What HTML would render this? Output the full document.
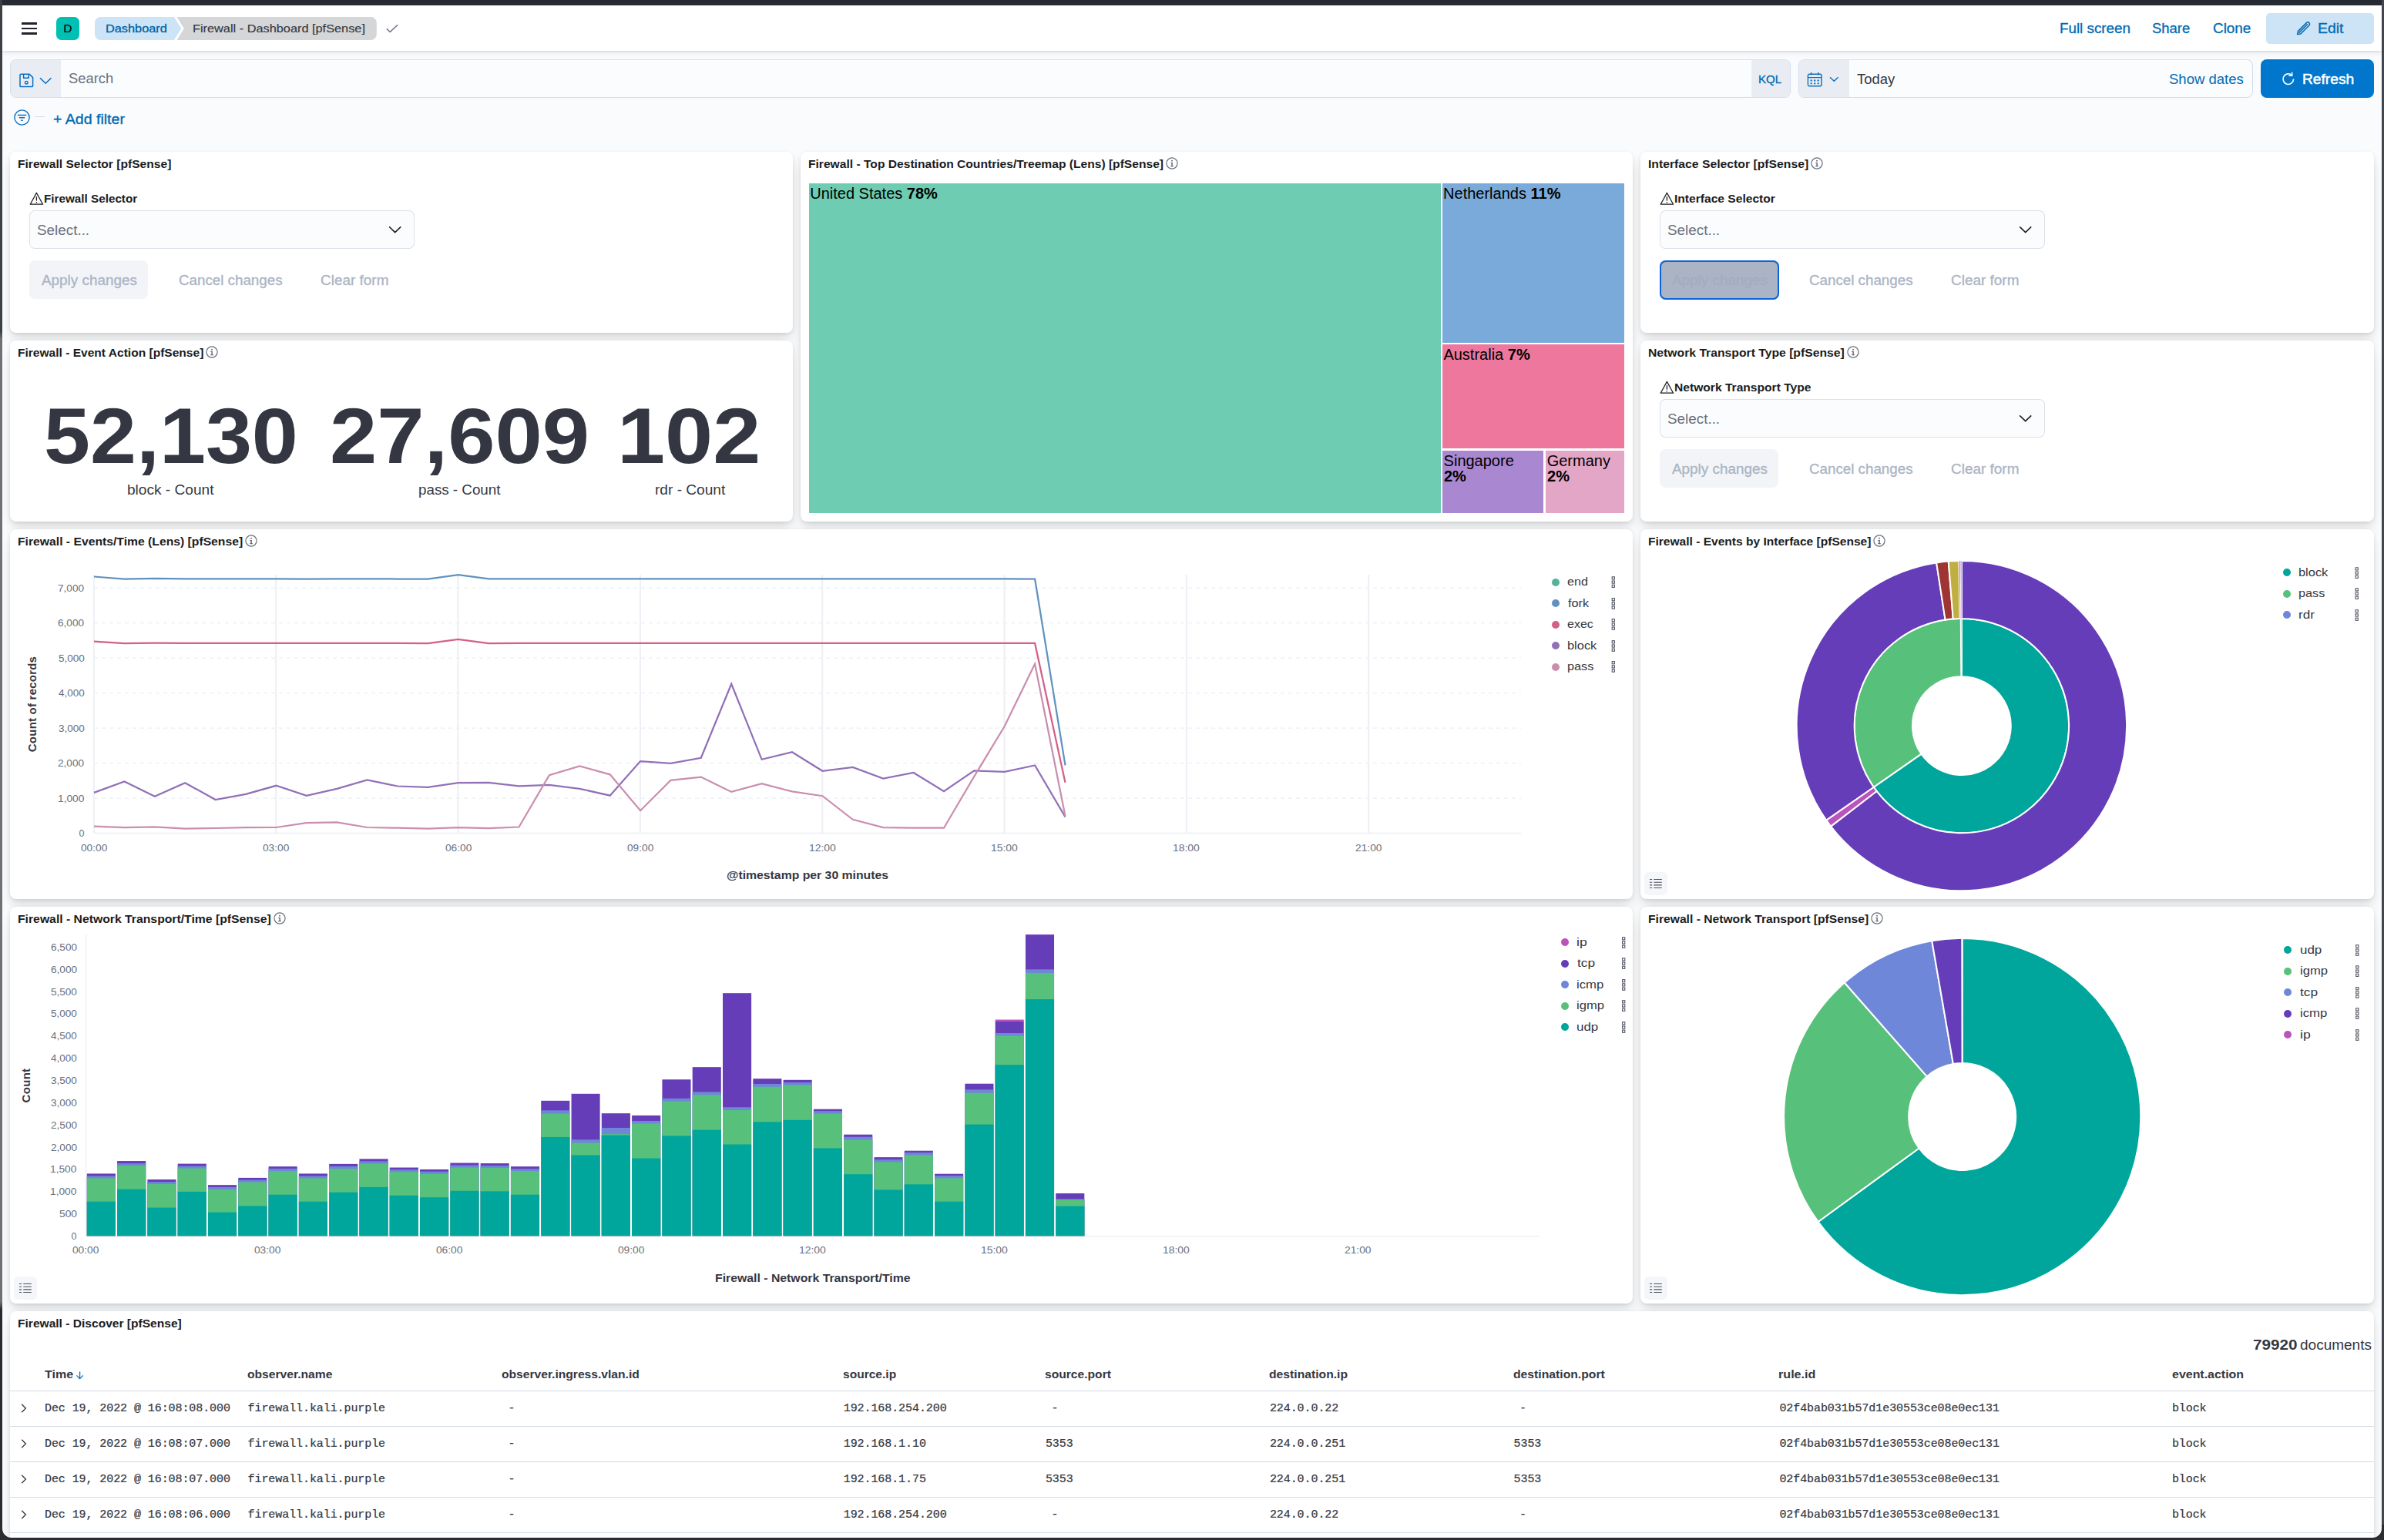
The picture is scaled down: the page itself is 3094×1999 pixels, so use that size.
<!DOCTYPE html>
<html><head><meta charset="utf-8"><title>Firewall - Dashboard [pfSense]</title>
<style>
html,body{margin:0;padding:0;}
html{width:3094px;height:1999px;overflow:hidden;}
body{width:3094px;height:1999px;overflow:hidden;position:relative;background:#fafbfd;font-family:"Liberation Sans",sans-serif;}
.t{position:absolute;white-space:pre;}
.p{position:absolute;background:#fff;border-radius:8px;box-shadow:0 1.1px 5px -1.25px rgba(0,0,0,.09),0 3.2px 10px -1.25px rgba(0,0,0,.07),0 7px 15px -1.25px rgba(0,0,0,.055),0 18px 18px -1.25px rgba(0,0,0,.045);}
svg{overflow:visible}
</style></head><body>
<div style="position:absolute;left:3.00px;top:0.00px;width:3088.00px;height:66.00px;background:#fff;box-shadow:0 1px 3px rgba(30,50,90,.14),0 3px 7px rgba(30,50,90,.08);"></div>
<div style="position:absolute;left:28.00px;top:29.20px;width:20.00px;height:2.60px;background:#22242e;"></div>
<div style="position:absolute;left:28.00px;top:35.70px;width:20.00px;height:2.60px;background:#22242e;"></div>
<div style="position:absolute;left:28.00px;top:42.10px;width:20.00px;height:2.60px;background:#22242e;"></div>
<div style="position:absolute;left:73.00px;top:22.00px;width:30.00px;height:30.00px;background:#00bfb3;border-radius:6.5px;"></div>
<div class="t" style="left:82.15px;top:29.00px;font:normal 15.50px/1 'Liberation Sans',sans-serif;color:#000;-webkit-text-stroke:0.10px #000;">D</div>
<svg style="position:absolute;left:123.00px;top:22.00px;" width="370.00" height="30.00" viewBox="0 0 370 30"><path d="M7.5 0H103L112.3 15L103 30H7.5A7.5 7.5 0 0 1 0 22.5V7.5A7.5 7.5 0 0 1 7.5 0Z" fill="#cce4f5"/><path d="M106.5 0H358.3A7.5 7.5 0 0 1 365.8 7.5V22.5A7.5 7.5 0 0 1 358.3 30H106.5L115.8 15Z" fill="#d5d6d8"/></svg>
<div class="t" style="left:136.89px;top:29.00px;font:normal 15.00px/1 'Liberation Sans',sans-serif;color:#0061a6;transform:scaleX(1.0877);transform-origin:0 0;-webkit-text-stroke:0.30px #0061a6;">Dashboard</div>
<div class="t" style="left:250.40px;top:29.00px;font:normal 15.00px/1 'Liberation Sans',sans-serif;color:#343741;transform:scaleX(1.0874);transform-origin:0 0;-webkit-text-stroke:0.15px #343741;">Firewall - Dashboard [pfSense]</div>
<svg style="position:absolute;left:500.00px;top:30.00px;" width="18.00" height="14.00" viewBox="0 0 18 14"><path d="M1.8 7.2L6.2 11.5L16.2 2.2" fill="none" stroke="#69707d" stroke-width="1.5"/></svg>
<div class="t" style="left:2672.80px;top:29.00px;font:normal 17.50px/1 'Liberation Sans',sans-serif;color:#006bb4;transform:scaleX(1.0743);transform-origin:0 0;-webkit-text-stroke:0.30px #006bb4;">Full screen</div>
<div class="t" style="left:2793.47px;top:29.00px;font:normal 17.50px/1 'Liberation Sans',sans-serif;color:#006bb4;transform:scaleX(1.0543);transform-origin:0 0;-webkit-text-stroke:0.30px #006bb4;">Share</div>
<div class="t" style="left:2871.76px;top:29.00px;font:normal 17.50px/1 'Liberation Sans',sans-serif;color:#006bb4;transform:scaleX(1.0794);transform-origin:0 0;-webkit-text-stroke:0.30px #006bb4;">Clone</div>
<div style="position:absolute;left:2941.00px;top:17.00px;width:140.00px;height:40.00px;background:#cce4f5;border-radius:5px;"></div>
<svg style="position:absolute;left:2980.00px;top:27.00px;" width="20.00" height="20.00" viewBox="0 0 20 20"><path d="M1.6 17.6L2.4 13.6L13.4 2.6a2.4 2.4 0 0 1 3.4 3.4L5.8 17Z M3.6 15.6L14.9 4.3" fill="none" stroke="#006bb4" stroke-width="1.5" stroke-linejoin="round"/></svg>
<div class="t" style="left:3008.34px;top:29.00px;font:normal 17.50px/1 'Liberation Sans',sans-serif;color:#006bb4;transform:scaleX(1.1115);transform-origin:0 0;-webkit-text-stroke:0.30px #006bb4;">Edit</div>
<div style="position:absolute;left:13.00px;top:77.00px;width:2311.00px;height:50.00px;background:#fbfcfd;border-radius:8px;box-shadow:inset 0 0 0 1px rgba(17,63,150,.16);"></div>
<div style="position:absolute;left:14px;top:78px;width:65px;height:48px;background:#e9edf3;border-radius:7px 0 0 7px;"></div>
<svg style="position:absolute;left:24.50px;top:94.50px;" width="19.00" height="19.00" viewBox="0 0 19 19"><path d="M2.2 1.2H13.2L17.6 5.6V16.4a1.2 1.2 0 0 1-1.2 1.2H2.2A1.2 1.2 0 0 1 1 16.4V2.4A1.2 1.2 0 0 1 2.2 1.2Z M5.6 1.5V6.2H12.2V1.5" fill="none" stroke="#0a6fc2" stroke-width="1.5" stroke-linejoin="round"/><circle cx="9.3" cy="12.2" r="1.8" fill="none" stroke="#0a6fc2" stroke-width="1.4"/></svg>
<svg style="position:absolute;left:51.00px;top:99.50px;" width="17.00" height="10.00" viewBox="0 0 17 10"><path d="M1 1.2L8.2 8.2L15.4 1.2" fill="none" stroke="#0a6fc2" stroke-width="1.6"/></svg>
<div class="t" style="left:89.27px;top:94.00px;font:normal 17.50px/1 'Liberation Sans',sans-serif;color:#69707d;transform:scaleX(1.0495);transform-origin:0 0;">Search</div>
<div style="position:absolute;left:2273px;top:78px;width:50px;height:48px;background:#e9edf3;border-radius:0 7px 7px 0;"></div>
<div class="t" style="left:2281.99px;top:95.00px;font:normal 15.00px/1 'Liberation Sans',sans-serif;color:#006bb4;transform:scaleX(1.0053);transform-origin:0 0;-webkit-text-stroke:0.35px #006bb4;">KQL</div>
<div style="position:absolute;left:2334.00px;top:77.00px;width:589.50px;height:50.00px;background:#fbfcfd;border-radius:8px;box-shadow:inset 0 0 0 1px rgba(17,63,150,.16);"></div>
<div style="position:absolute;left:2335px;top:78px;width:65px;height:48px;background:#e9edf3;border-radius:7px 0 0 7px;"></div>
<svg style="position:absolute;left:2344.50px;top:92.50px;" width="21.00" height="21.00" viewBox="0 0 21 21"><rect x="1.4" y="3.2" width="17.6" height="15.6" rx="2" fill="none" stroke="#0a6fc2" stroke-width="1.4"/><path d="M1.4 7.6H19 M5.6 1V4.6 M14.8 1V4.6" stroke="#0a6fc2" stroke-width="1.4" fill="none"/><path d="M4.6 10.6h2.2v1.8H4.6z M9.1 10.6h2.2v1.8H9.1z M13.6 10.6h2.2v1.8h-2.2z M4.6 14.4h2.2v1.8H4.6z M9.1 14.4h2.2v1.8H9.1z M13.6 14.4h2.2v1.8h-2.2z" fill="#0a6fc2"/></svg>
<svg style="position:absolute;left:2374.00px;top:98.50px;" width="13.00" height="8.00" viewBox="0 0 13 8"><path d="M1 1.2L6.3 6.3L11.6 1.2" fill="none" stroke="#0a6fc2" stroke-width="1.4"/></svg>
<div class="t" style="left:2410.33px;top:95.00px;font:normal 17.50px/1 'Liberation Sans',sans-serif;color:#343741;transform:scaleX(1.0523);transform-origin:0 0;">Today</div>
<div class="t" style="left:2815.17px;top:95.00px;font:normal 17.50px/1 'Liberation Sans',sans-serif;color:#006bb4;transform:scaleX(1.0584);transform-origin:0 0;">Show dates</div>
<div style="position:absolute;left:2934.00px;top:77.00px;width:147.00px;height:50.00px;background:#0077cc;border-radius:8px;"></div>
<svg style="position:absolute;left:2961.00px;top:92.50px;" width="19.00" height="19.00" viewBox="0 0 19 19"><path d="M15.6 9.6a6.8 6.8 0 1 1-2.2-5" fill="none" stroke="#fff" stroke-width="1.6"/><path d="M13.6 0.8V5.2H9.2" fill="none" stroke="#fff" stroke-width="1.6"/></svg>
<div class="t" style="left:2988.46px;top:95.00px;font:normal 17.50px/1 'Liberation Sans',sans-serif;color:#fff;transform:scaleX(1.0969);transform-origin:0 0;-webkit-text-stroke:0.50px #fff;">Refresh</div>
<svg style="position:absolute;left:17.50px;top:141.50px;" width="21.00" height="21.00" viewBox="0 0 21 21"><circle cx="10.5" cy="10.5" r="9.6" fill="none" stroke="#0a6fc2" stroke-width="1.4"/><path d="M4.8 7.4H16.2 M6.8 10.8H14.2 M9.2 14.2H11.8" stroke="#0a6fc2" stroke-width="1.5"/></svg>
<div style="position:absolute;left:45.30px;top:150.80px;width:12.60px;height:1.30px;background:#d3dae6;"></div>
<div class="t" style="left:68.72px;top:147.00px;font:normal 17.50px/1 'Liberation Sans',sans-serif;color:#006bb4;transform:scaleX(1.1173);transform-origin:0 0;-webkit-text-stroke:0.33px #006bb4;">+ Add filter</div>
<div class="p" style="left:13px;top:197px;width:1016px;height:235px;"></div>
<div class="p" style="left:1039px;top:197px;width:1080px;height:480px;"></div>
<div class="p" style="left:2129px;top:197px;width:952px;height:235px;"></div>
<div class="p" style="left:13px;top:442px;width:1016px;height:235px;"></div>
<div class="p" style="left:2129px;top:442px;width:952px;height:235px;"></div>
<div class="p" style="left:13px;top:687px;width:2106px;height:480px;"></div>
<div class="p" style="left:2129px;top:687px;width:952px;height:480px;"></div>
<div class="p" style="left:13px;top:1177px;width:2106px;height:515px;"></div>
<div class="p" style="left:2129px;top:1177px;width:952px;height:515px;"></div>
<div class="p" style="left:13px;top:1702px;width:3068px;height:297px;border-radius:8px 8px 0 0;"></div>
<div class="t" style="left:22.59px;top:205.00px;font:bold 15.00px/1 'Liberation Sans',sans-serif;color:#1a1c21;transform:scaleX(1.0396);transform-origin:0 0;">Firewall Selector [pfSense]</div>
<div class="t" style="left:1048.59px;top:205.00px;font:bold 15.00px/1 'Liberation Sans',sans-serif;color:#1a1c21;transform:scaleX(1.0404);transform-origin:0 0;">Firewall - Top Destination Countries/Treemap (Lens) [pfSense]</div>
<svg style="position:absolute;left:1512.90px;top:203.90px;" width="16.00" height="16.00" viewBox="0 0 16 16"><circle cx="8" cy="8" r="7.1" fill="none" stroke="#69707d" stroke-width="1.2"/><rect x="7.2" y="3.9" width="1.6" height="1.7" fill="#5a606c"/><path d="M6.3 6.9H8.8V11.3H9.9V12.3H6.1V11.3H7.4V7.9H6.3Z" fill="#5a606c"/></svg>
<div class="t" style="left:2138.58px;top:205.00px;font:bold 15.00px/1 'Liberation Sans',sans-serif;color:#1a1c21;transform:scaleX(1.0491);transform-origin:0 0;">Interface Selector [pfSense]</div>
<svg style="position:absolute;left:2350.00px;top:203.90px;" width="16.00" height="16.00" viewBox="0 0 16 16"><circle cx="8" cy="8" r="7.1" fill="none" stroke="#69707d" stroke-width="1.2"/><rect x="7.2" y="3.9" width="1.6" height="1.7" fill="#5a606c"/><path d="M6.3 6.9H8.8V11.3H9.9V12.3H6.1V11.3H7.4V7.9H6.3Z" fill="#5a606c"/></svg>
<div class="t" style="left:22.59px;top:450.00px;font:bold 15.00px/1 'Liberation Sans',sans-serif;color:#1a1c21;transform:scaleX(1.0365);transform-origin:0 0;">Firewall - Event Action [pfSense]</div>
<svg style="position:absolute;left:267.20px;top:448.90px;" width="16.00" height="16.00" viewBox="0 0 16 16"><circle cx="8" cy="8" r="7.1" fill="none" stroke="#69707d" stroke-width="1.2"/><rect x="7.2" y="3.9" width="1.6" height="1.7" fill="#5a606c"/><path d="M6.3 6.9H8.8V11.3H9.9V12.3H6.1V11.3H7.4V7.9H6.3Z" fill="#5a606c"/></svg>
<div class="t" style="left:2138.58px;top:450.00px;font:bold 15.00px/1 'Liberation Sans',sans-serif;color:#1a1c21;transform:scaleX(1.0479);transform-origin:0 0;">Network Transport Type [pfSense]</div>
<svg style="position:absolute;left:2396.60px;top:448.90px;" width="16.00" height="16.00" viewBox="0 0 16 16"><circle cx="8" cy="8" r="7.1" fill="none" stroke="#69707d" stroke-width="1.2"/><rect x="7.2" y="3.9" width="1.6" height="1.7" fill="#5a606c"/><path d="M6.3 6.9H8.8V11.3H9.9V12.3H6.1V11.3H7.4V7.9H6.3Z" fill="#5a606c"/></svg>
<div class="t" style="left:22.58px;top:695.00px;font:bold 15.00px/1 'Liberation Sans',sans-serif;color:#1a1c21;transform:scaleX(1.0473);transform-origin:0 0;">Firewall - Events/Time (Lens) [pfSense]</div>
<svg style="position:absolute;left:318.00px;top:693.90px;" width="16.00" height="16.00" viewBox="0 0 16 16"><circle cx="8" cy="8" r="7.1" fill="none" stroke="#69707d" stroke-width="1.2"/><rect x="7.2" y="3.9" width="1.6" height="1.7" fill="#5a606c"/><path d="M6.3 6.9H8.8V11.3H9.9V12.3H6.1V11.3H7.4V7.9H6.3Z" fill="#5a606c"/></svg>
<div class="t" style="left:2138.59px;top:695.00px;font:bold 15.00px/1 'Liberation Sans',sans-serif;color:#1a1c21;transform:scaleX(1.0364);transform-origin:0 0;">Firewall - Events by Interface [pfSense]</div>
<svg style="position:absolute;left:2431.30px;top:693.90px;" width="16.00" height="16.00" viewBox="0 0 16 16"><circle cx="8" cy="8" r="7.1" fill="none" stroke="#69707d" stroke-width="1.2"/><rect x="7.2" y="3.9" width="1.6" height="1.7" fill="#5a606c"/><path d="M6.3 6.9H8.8V11.3H9.9V12.3H6.1V11.3H7.4V7.9H6.3Z" fill="#5a606c"/></svg>
<div class="t" style="left:22.58px;top:1185.00px;font:bold 15.00px/1 'Liberation Sans',sans-serif;color:#1a1c21;transform:scaleX(1.0497);transform-origin:0 0;">Firewall - Network Transport/Time [pfSense]</div>
<svg style="position:absolute;left:354.50px;top:1183.90px;" width="16.00" height="16.00" viewBox="0 0 16 16"><circle cx="8" cy="8" r="7.1" fill="none" stroke="#69707d" stroke-width="1.2"/><rect x="7.2" y="3.9" width="1.6" height="1.7" fill="#5a606c"/><path d="M6.3 6.9H8.8V11.3H9.9V12.3H6.1V11.3H7.4V7.9H6.3Z" fill="#5a606c"/></svg>
<div class="t" style="left:2138.58px;top:1185.00px;font:bold 15.00px/1 'Liberation Sans',sans-serif;color:#1a1c21;transform:scaleX(1.0434);transform-origin:0 0;">Firewall - Network Transport [pfSense]</div>
<svg style="position:absolute;left:2428.00px;top:1183.90px;" width="16.00" height="16.00" viewBox="0 0 16 16"><circle cx="8" cy="8" r="7.1" fill="none" stroke="#69707d" stroke-width="1.2"/><rect x="7.2" y="3.9" width="1.6" height="1.7" fill="#5a606c"/><path d="M6.3 6.9H8.8V11.3H9.9V12.3H6.1V11.3H7.4V7.9H6.3Z" fill="#5a606c"/></svg>
<div class="t" style="left:22.59px;top:1710.00px;font:bold 15.00px/1 'Liberation Sans',sans-serif;color:#1a1c21;transform:scaleX(1.0373);transform-origin:0 0;">Firewall - Discover [pfSense]</div>
<svg style="position:absolute;left:38.30px;top:249.20px;" width="19.00" height="18.00" viewBox="0 0 19 18"><path d="M9.4 1.4L17.6 16.2H1.2Z" fill="none" stroke="#1a1c21" stroke-width="1.25" stroke-linejoin="round"/><path d="M9.4 6.2V11.6" stroke="#1a1c21" stroke-width="1.3"/><rect x="8.75" y="13" width="1.3" height="1.4" fill="#1a1c21"/></svg>
<div class="t" style="left:57.31px;top:250.00px;font:bold 15.00px/1 'Liberation Sans',sans-serif;color:#1a1c21;transform:scaleX(1.0165);transform-origin:0 0;">Firewall Selector</div>
<div style="position:absolute;left:38.30px;top:273.00px;width:499.50px;height:50.00px;background:#fbfcfd;border-radius:7.5px;box-shadow:inset 0 0 0 1px rgba(17,43,100,.13);"></div>
<div class="t" style="left:47.95px;top:291.00px;font:normal 17.50px/1 'Liberation Sans',sans-serif;color:#69707d;transform:scaleX(1.0772);transform-origin:0 0;">Select...</div>
<svg style="position:absolute;left:503.80px;top:293.40px;" width="18.00" height="11.00" viewBox="0 0 18 11"><path d="M1.2 1.4L8.7 8.6L16.2 1.4" fill="none" stroke="#1a1c21" stroke-width="1.5"/></svg>
<div style="position:absolute;left:38.30px;top:338.20px;width:153.60px;height:49.60px;background:#f2f4f8;border-radius:7.5px;"></div>
<div class="t" style="left:53.50px;top:356.00px;font:normal 17.50px/1 'Liberation Sans',sans-serif;color:#abb4c4;transform:scaleX(1.0789);transform-origin:0 0;-webkit-text-stroke:0.30px #abb4c4;">Apply changes</div>
<div class="t" style="left:231.66px;top:356.00px;font:normal 17.50px/1 'Liberation Sans',sans-serif;color:#abb4c4;transform:scaleX(1.0719);transform-origin:0 0;-webkit-text-stroke:0.30px #abb4c4;">Cancel changes</div>
<div class="t" style="left:415.75px;top:356.00px;font:normal 17.50px/1 'Liberation Sans',sans-serif;color:#abb4c4;transform:scaleX(1.0826);transform-origin:0 0;-webkit-text-stroke:0.30px #abb4c4;">Clear form</div>
<svg style="position:absolute;left:2154.30px;top:249.20px;" width="19.00" height="18.00" viewBox="0 0 19 18"><path d="M9.4 1.4L17.6 16.2H1.2Z" fill="none" stroke="#1a1c21" stroke-width="1.25" stroke-linejoin="round"/><path d="M9.4 6.2V11.6" stroke="#1a1c21" stroke-width="1.3"/><rect x="8.75" y="13" width="1.3" height="1.4" fill="#1a1c21"/></svg>
<div class="t" style="left:2173.29px;top:250.00px;font:bold 15.00px/1 'Liberation Sans',sans-serif;color:#1a1c21;transform:scaleX(1.0399);transform-origin:0 0;">Interface Selector</div>
<div style="position:absolute;left:2154.30px;top:273.00px;width:499.50px;height:50.00px;background:#fbfcfd;border-radius:7.5px;box-shadow:inset 0 0 0 1px rgba(17,43,100,.13);"></div>
<div class="t" style="left:2163.95px;top:291.00px;font:normal 17.50px/1 'Liberation Sans',sans-serif;color:#69707d;transform:scaleX(1.0772);transform-origin:0 0;">Select...</div>
<svg style="position:absolute;left:2619.80px;top:293.40px;" width="18.00" height="11.00" viewBox="0 0 18 11"><path d="M1.2 1.4L8.7 8.6L16.2 1.4" fill="none" stroke="#1a1c21" stroke-width="1.5"/></svg>
<div style="position:absolute;left:2154.10px;top:338.00px;width:154.60px;height:50.80px;background:#abb4c4;border-radius:8px;box-shadow:inset 0 0 0 2px #0b64dd;"></div>
<div class="t" style="left:2169.50px;top:356.00px;font:normal 17.50px/1 'Liberation Sans',sans-serif;color:#a3adbf;transform:scaleX(1.0789);transform-origin:0 0;-webkit-text-stroke:0.30px #a3adbf;">Apply changes</div>
<div class="t" style="left:2347.66px;top:356.00px;font:normal 17.50px/1 'Liberation Sans',sans-serif;color:#abb4c4;transform:scaleX(1.0719);transform-origin:0 0;-webkit-text-stroke:0.30px #abb4c4;">Cancel changes</div>
<div class="t" style="left:2531.75px;top:356.00px;font:normal 17.50px/1 'Liberation Sans',sans-serif;color:#abb4c4;transform:scaleX(1.0826);transform-origin:0 0;-webkit-text-stroke:0.30px #abb4c4;">Clear form</div>
<svg style="position:absolute;left:2154.30px;top:494.20px;" width="19.00" height="18.00" viewBox="0 0 19 18"><path d="M9.4 1.4L17.6 16.2H1.2Z" fill="none" stroke="#1a1c21" stroke-width="1.25" stroke-linejoin="round"/><path d="M9.4 6.2V11.6" stroke="#1a1c21" stroke-width="1.3"/><rect x="8.75" y="13" width="1.3" height="1.4" fill="#1a1c21"/></svg>
<div class="t" style="left:2173.29px;top:495.00px;font:bold 15.00px/1 'Liberation Sans',sans-serif;color:#1a1c21;transform:scaleX(1.0401);transform-origin:0 0;">Network Transport Type</div>
<div style="position:absolute;left:2154.30px;top:518.00px;width:499.50px;height:50.00px;background:#fbfcfd;border-radius:7.5px;box-shadow:inset 0 0 0 1px rgba(17,43,100,.13);"></div>
<div class="t" style="left:2163.95px;top:536.00px;font:normal 17.50px/1 'Liberation Sans',sans-serif;color:#69707d;transform:scaleX(1.0772);transform-origin:0 0;">Select...</div>
<svg style="position:absolute;left:2619.80px;top:538.40px;" width="18.00" height="11.00" viewBox="0 0 18 11"><path d="M1.2 1.4L8.7 8.6L16.2 1.4" fill="none" stroke="#1a1c21" stroke-width="1.5"/></svg>
<div style="position:absolute;left:2154.30px;top:583.20px;width:153.60px;height:49.60px;background:#f2f4f8;border-radius:7.5px;"></div>
<div class="t" style="left:2169.50px;top:601.00px;font:normal 17.50px/1 'Liberation Sans',sans-serif;color:#abb4c4;transform:scaleX(1.0789);transform-origin:0 0;-webkit-text-stroke:0.30px #abb4c4;">Apply changes</div>
<div class="t" style="left:2347.66px;top:601.00px;font:normal 17.50px/1 'Liberation Sans',sans-serif;color:#abb4c4;transform:scaleX(1.0719);transform-origin:0 0;-webkit-text-stroke:0.30px #abb4c4;">Cancel changes</div>
<div class="t" style="left:2531.75px;top:601.00px;font:normal 17.50px/1 'Liberation Sans',sans-serif;color:#abb4c4;transform:scaleX(1.0826);transform-origin:0 0;-webkit-text-stroke:0.30px #abb4c4;">Clear form</div>
<div class="t" style="left:56.76px;top:515.00px;font:bold 102.00px/1 'Liberation Sans',sans-serif;color:#343741;transform:scaleX(1.0573);transform-origin:0 0;">52,130</div>
<div class="t" style="left:428.09px;top:515.00px;font:bold 102.00px/1 'Liberation Sans',sans-serif;color:#343741;transform:scaleX(1.0802);transform-origin:0 0;">27,609</div>
<div class="t" style="left:800.85px;top:515.00px;font:bold 102.00px/1 'Liberation Sans',sans-serif;color:#343741;transform:scaleX(1.0947);transform-origin:0 0;">102</div>
<div class="t" style="left:165.00px;top:628.00px;font:normal 17.50px/1 'Liberation Sans',sans-serif;color:#343741;transform:scaleX(1.0909);transform-origin:0 0;">block - Count</div>
<div class="t" style="left:543.37px;top:628.00px;font:normal 17.50px/1 'Liberation Sans',sans-serif;color:#343741;transform:scaleX(1.0725);transform-origin:0 0;">pass - Count</div>
<div class="t" style="left:850.11px;top:628.00px;font:normal 17.50px/1 'Liberation Sans',sans-serif;color:#343741;transform:scaleX(1.0907);transform-origin:0 0;">rdr - Count</div>
<div style="position:absolute;left:1049.90px;top:237.90px;width:820.00px;height:428.00px;background:#6dccb1;"></div>
<div style="position:absolute;left:1871.70px;top:237.90px;width:236.20px;height:207.00px;background:#79aad9;"></div>
<div style="position:absolute;left:1871.70px;top:447.30px;width:236.20px;height:134.90px;background:#ee789d;"></div>
<div style="position:absolute;left:1871.70px;top:584.60px;width:131.50px;height:81.30px;background:#a987d1;"></div>
<div style="position:absolute;left:2005.90px;top:584.60px;width:102.00px;height:81.30px;background:#e4a6c7;"></div>
<div class="t" style="left:1051.20px;top:241.00px;font:normal 20.00px/1 'Liberation Sans',sans-serif;color:#000;">United States <b>78%</b></div>
<div class="t" style="left:1873.10px;top:241.00px;font:normal 20.00px/1 'Liberation Sans',sans-serif;color:#000;">Netherlands <b>11%</b></div>
<div class="t" style="left:1873.40px;top:450.00px;font:normal 20.00px/1 'Liberation Sans',sans-serif;color:#000;">Australia <b>7%</b></div>
<div class="t" style="left:1873.60px;top:588.00px;font:normal 20.00px/1 'Liberation Sans',sans-serif;color:#000;">Singapore</div>
<div class="t" style="left:1873.90px;top:608.00px;font:bold 20.00px/1 'Liberation Sans',sans-serif;color:#000;">2%</div>
<div class="t" style="left:2007.70px;top:588.00px;font:normal 20.00px/1 'Liberation Sans',sans-serif;color:#000;">Germany</div>
<div class="t" style="left:2008.10px;top:608.00px;font:bold 20.00px/1 'Liberation Sans',sans-serif;color:#000;">2%</div>
<svg style="position:absolute;left:0.00px;top:0.00px;pointer-events:none;" width="3094.00" height="1999.00" viewBox="0 0 3094 1999"><line x1="122.0" y1="1036.10" x2="1974" y2="1036.10" stroke="#ebedf3" stroke-width="1.25" stroke-dasharray="5 5"/><line x1="122.0" y1="990.60" x2="1974" y2="990.60" stroke="#ebedf3" stroke-width="1.25" stroke-dasharray="5 5"/><line x1="122.0" y1="945.10" x2="1974" y2="945.10" stroke="#ebedf3" stroke-width="1.25" stroke-dasharray="5 5"/><line x1="122.0" y1="899.60" x2="1974" y2="899.60" stroke="#ebedf3" stroke-width="1.25" stroke-dasharray="5 5"/><line x1="122.0" y1="854.10" x2="1974" y2="854.10" stroke="#ebedf3" stroke-width="1.25" stroke-dasharray="5 5"/><line x1="122.0" y1="808.60" x2="1974" y2="808.60" stroke="#ebedf3" stroke-width="1.25" stroke-dasharray="5 5"/><line x1="122.0" y1="763.10" x2="1974" y2="763.10" stroke="#ebedf3" stroke-width="1.25" stroke-dasharray="5 5"/><line x1="121.84" y1="746" x2="121.84" y2="1081.60" stroke="#eff0f5" stroke-width="2.2"/><line x1="358.18" y1="746" x2="358.18" y2="1081.60" stroke="#eff0f5" stroke-width="2.2"/><line x1="594.52" y1="746" x2="594.52" y2="1081.60" stroke="#eff0f5" stroke-width="2.2"/><line x1="830.86" y1="746" x2="830.86" y2="1081.60" stroke="#eff0f5" stroke-width="2.2"/><line x1="1067.20" y1="746" x2="1067.20" y2="1081.60" stroke="#eff0f5" stroke-width="2.2"/><line x1="1303.54" y1="746" x2="1303.54" y2="1081.60" stroke="#eff0f5" stroke-width="2.2"/><line x1="1539.88" y1="746" x2="1539.88" y2="1081.60" stroke="#eff0f5" stroke-width="2.2"/><line x1="1776.22" y1="746" x2="1776.22" y2="1081.60" stroke="#eff0f5" stroke-width="2.2"/><line x1="122.04" y1="1081.60" x2="1974" y2="1081.60" stroke="#eceef3" stroke-width="1.5"/><polyline points="122.0,748.5 161.4,751.5 200.8,750.8 240.2,751.3 279.6,751.3 319.0,751.3 358.4,751.3 397.8,751.5 437.2,751.3 476.6,751.3 515.9,751.5 555.3,751.5 594.7,746.2 634.1,751.3 673.5,751.3 712.9,751.3 752.3,751.3 791.7,751.3 831.1,751.3 870.4,751.3 909.8,751.3 949.2,751.3 988.6,751.3 1028.0,751.3 1067.4,751.3 1106.8,751.3 1146.2,751.3 1185.6,751.3 1225.0,751.3 1264.3,751.3 1303.7,751.3 1343.1,751.5 1382.5,993.4" fill="none" stroke="#6092c0" stroke-width="2.25" stroke-linejoin="miter"/><polyline points="122.0,832.6 161.4,835.1 200.8,834.6 240.2,834.9 279.6,834.9 319.0,834.9 358.4,834.9 397.8,834.9 437.2,834.9 476.6,834.9 515.9,834.9 555.3,835.1 594.7,829.8 634.1,835.1 673.5,834.9 712.9,834.9 752.3,834.9 791.7,834.9 831.1,834.9 870.4,834.9 909.8,834.9 949.2,834.9 988.6,834.9 1028.0,834.9 1067.4,834.9 1106.8,834.9 1146.2,834.9 1185.6,834.9 1225.0,834.9 1264.3,834.9 1303.7,834.9 1343.1,834.9 1382.5,1015.7" fill="none" stroke="#d36086" stroke-width="2.25" stroke-linejoin="miter"/><polyline points="122.0,1028.9 161.4,1014.4 200.8,1033.7 240.2,1016.2 279.6,1038.0 319.0,1030.9 358.4,1019.8 397.8,1032.9 437.2,1023.8 476.6,1012.4 515.9,1020.5 555.3,1021.8 594.7,1016.2 634.1,1016.0 673.5,1020.3 712.9,1019.0 752.3,1023.8 791.7,1032.7 831.1,988.1 870.4,990.9 909.8,983.8 949.2,887.8 988.6,985.8 1028.0,976.2 1067.4,1000.8 1106.8,996.0 1146.2,1010.6 1185.6,1003.0 1225.0,1027.1 1264.3,1000.3 1303.7,1001.8 1343.1,993.4 1382.5,1060.5" fill="none" stroke="#9170b8" stroke-width="2.25" stroke-linejoin="miter"/><polyline points="122.0,1072.7 161.4,1074.2 200.8,1073.5 240.2,1075.5 279.6,1075.0 319.0,1074.2 358.4,1074.0 397.8,1068.1 437.2,1067.4 476.6,1074.0 515.9,1074.7 555.3,1075.7 594.7,1074.2 634.1,1075.0 673.5,1073.5 712.9,1006.1 752.3,994.4 791.7,1005.3 831.1,1052.2 870.4,1012.9 909.8,1008.6 949.2,1027.9 988.6,1017.2 1028.0,1027.4 1067.4,1033.2 1106.8,1063.8 1146.2,1074.2 1185.6,1074.7 1225.0,1074.7 1264.3,1007.9 1303.7,942.8 1343.1,861.7 1382.5,1059.3" fill="none" stroke="#ca8eae" stroke-width="2.25" stroke-linejoin="miter"/></svg>
<div class="t" style="left:102.40px;top:1076.00px;font:normal 12.50px/1 'Liberation Sans',sans-serif;color:#69707d;">0</div>
<div class="t" style="left:75.02px;top:1031.00px;font:normal 12.50px/1 'Liberation Sans',sans-serif;color:#69707d;transform:scaleX(1.0994);transform-origin:0 0;">1,000</div>
<div class="t" style="left:75.37px;top:985.00px;font:normal 12.50px/1 'Liberation Sans',sans-serif;color:#69707d;transform:scaleX(1.0880);transform-origin:0 0;">2,000</div>
<div class="t" style="left:75.58px;top:940.00px;font:normal 12.50px/1 'Liberation Sans',sans-serif;color:#69707d;transform:scaleX(1.0813);transform-origin:0 0;">3,000</div>
<div class="t" style="left:75.79px;top:894.00px;font:normal 12.50px/1 'Liberation Sans',sans-serif;color:#69707d;transform:scaleX(1.0747);transform-origin:0 0;">4,000</div>
<div class="t" style="left:75.51px;top:849.00px;font:normal 12.50px/1 'Liberation Sans',sans-serif;color:#69707d;transform:scaleX(1.0836);transform-origin:0 0;">5,000</div>
<div class="t" style="left:75.37px;top:803.00px;font:normal 12.50px/1 'Liberation Sans',sans-serif;color:#69707d;transform:scaleX(1.0880);transform-origin:0 0;">6,000</div>
<div class="t" style="left:75.37px;top:758.00px;font:normal 12.50px/1 'Liberation Sans',sans-serif;color:#69707d;transform:scaleX(1.0880);transform-origin:0 0;">7,000</div>
<div class="t" style="left:104.91px;top:1095.00px;font:normal 12.50px/1 'Liberation Sans',sans-serif;color:#69707d;transform:scaleX(1.0963);transform-origin:0 0;">00:00</div>
<div class="t" style="left:341.25px;top:1095.00px;font:normal 12.50px/1 'Liberation Sans',sans-serif;color:#69707d;transform:scaleX(1.0963);transform-origin:0 0;">03:00</div>
<div class="t" style="left:577.59px;top:1095.00px;font:normal 12.50px/1 'Liberation Sans',sans-serif;color:#69707d;transform:scaleX(1.0963);transform-origin:0 0;">06:00</div>
<div class="t" style="left:813.93px;top:1095.00px;font:normal 12.50px/1 'Liberation Sans',sans-serif;color:#69707d;transform:scaleX(1.0963);transform-origin:0 0;">09:00</div>
<div class="t" style="left:1049.71px;top:1095.00px;font:normal 12.50px/1 'Liberation Sans',sans-serif;color:#69707d;transform:scaleX(1.1146);transform-origin:0 0;">12:00</div>
<div class="t" style="left:1286.05px;top:1095.00px;font:normal 12.50px/1 'Liberation Sans',sans-serif;color:#69707d;transform:scaleX(1.1146);transform-origin:0 0;">15:00</div>
<div class="t" style="left:1522.39px;top:1095.00px;font:normal 12.50px/1 'Liberation Sans',sans-serif;color:#69707d;transform:scaleX(1.1146);transform-origin:0 0;">18:00</div>
<div class="t" style="left:1759.08px;top:1095.00px;font:normal 12.50px/1 'Liberation Sans',sans-serif;color:#69707d;transform:scaleX(1.1031);transform-origin:0 0;">21:00</div>
<div class="t" style="left:942.83px;top:1128.00px;font:bold 15.00px/1 'Liberation Sans',sans-serif;color:#343741;transform:scaleX(1.0519);transform-origin:0 0;">@timestamp per 30 minutes</div>
<div class="t" style="left:40.8px;top:913.5px;font:bold 15px/1 'Liberation Sans',sans-serif;color:#343741;letter-spacing:0.22px;transform:translate(-50%,-50%) rotate(-90deg);">Count of records</div>
<div style="position:absolute;left:2013.90px;top:750.90px;width:10.2px;height:10.2px;border-radius:50%;background:#54b399;"></div>
<div class="t" style="left:2034.06px;top:747.00px;font:normal 15.00px/1 'Liberation Sans',sans-serif;color:#343741;transform:scaleX(1.0735);transform-origin:0 0;">end</div>
<svg style="position:absolute;left:2087.00px;top:744.00px;" width="12.00" height="22.00" viewBox="0 0 12 22"><rect x="5.20" y="4.80" width="3.2" height="3.2" fill="none" stroke="#4a4f5c" stroke-width="1.05"/><rect x="5.20" y="10.00" width="3.2" height="3.2" fill="none" stroke="#4a4f5c" stroke-width="1.05"/><rect x="5.20" y="15.20" width="3.2" height="3.2" fill="none" stroke="#4a4f5c" stroke-width="1.05"/></svg>
<div style="position:absolute;left:2013.90px;top:778.10px;width:10.2px;height:10.2px;border-radius:50%;background:#6092c0;"></div>
<div class="t" style="left:2034.54px;top:775.00px;font:normal 15.00px/1 'Liberation Sans',sans-serif;color:#343741;transform:scaleX(1.0843);transform-origin:0 0;">fork</div>
<svg style="position:absolute;left:2087.00px;top:772.00px;" width="12.00" height="22.00" viewBox="0 0 12 22"><rect x="5.20" y="4.60" width="3.2" height="3.2" fill="none" stroke="#4a4f5c" stroke-width="1.05"/><rect x="5.20" y="9.80" width="3.2" height="3.2" fill="none" stroke="#4a4f5c" stroke-width="1.05"/><rect x="5.20" y="15.00" width="3.2" height="3.2" fill="none" stroke="#4a4f5c" stroke-width="1.05"/></svg>
<div style="position:absolute;left:2013.90px;top:805.50px;width:10.2px;height:10.2px;border-radius:50%;background:#d36086;"></div>
<div class="t" style="left:2034.06px;top:802.00px;font:normal 15.00px/1 'Liberation Sans',sans-serif;color:#343741;transform:scaleX(1.0660);transform-origin:0 0;">exec</div>
<svg style="position:absolute;left:2087.00px;top:799.00px;" width="12.00" height="22.00" viewBox="0 0 12 22"><rect x="5.20" y="4.60" width="3.2" height="3.2" fill="none" stroke="#4a4f5c" stroke-width="1.05"/><rect x="5.20" y="9.80" width="3.2" height="3.2" fill="none" stroke="#4a4f5c" stroke-width="1.05"/><rect x="5.20" y="15.00" width="3.2" height="3.2" fill="none" stroke="#4a4f5c" stroke-width="1.05"/></svg>
<div style="position:absolute;left:2013.90px;top:832.90px;width:10.2px;height:10.2px;border-radius:50%;background:#9170b8;"></div>
<div class="t" style="left:2033.72px;top:830.00px;font:normal 15.00px/1 'Liberation Sans',sans-serif;color:#343741;transform:scaleX(1.0936);transform-origin:0 0;">block</div>
<svg style="position:absolute;left:2087.00px;top:827.00px;" width="12.00" height="22.00" viewBox="0 0 12 22"><rect x="5.20" y="4.70" width="3.2" height="3.2" fill="none" stroke="#4a4f5c" stroke-width="1.05"/><rect x="5.20" y="9.90" width="3.2" height="3.2" fill="none" stroke="#4a4f5c" stroke-width="1.05"/><rect x="5.20" y="15.10" width="3.2" height="3.2" fill="none" stroke="#4a4f5c" stroke-width="1.05"/></svg>
<div style="position:absolute;left:2013.90px;top:860.70px;width:10.2px;height:10.2px;border-radius:50%;background:#ca8eae;"></div>
<div class="t" style="left:2033.73px;top:857.00px;font:normal 15.00px/1 'Liberation Sans',sans-serif;color:#343741;transform:scaleX(1.0819);transform-origin:0 0;">pass</div>
<svg style="position:absolute;left:2087.00px;top:854.00px;" width="12.00" height="22.00" viewBox="0 0 12 22"><rect x="5.20" y="4.60" width="3.2" height="3.2" fill="none" stroke="#4a4f5c" stroke-width="1.05"/><rect x="5.20" y="9.80" width="3.2" height="3.2" fill="none" stroke="#4a4f5c" stroke-width="1.05"/><rect x="5.20" y="15.00" width="3.2" height="3.2" fill="none" stroke="#4a4f5c" stroke-width="1.05"/></svg>
<svg style="position:absolute;left:0.00px;top:0.00px;pointer-events:none;" width="3094.00" height="1999.00" viewBox="0 0 3094 1999"><path d="M2545.90 802.90A139.20 139.20 0 1 1 2431.73 1021.74L2493.49 978.66A63.90 63.90 0 1 0 2545.90 878.20Z" fill="#00a69b" stroke="#fff" stroke-width="2.00" stroke-linejoin="round"/><path d="M2431.73 1021.74A139.20 139.20 0 0 1 2544.81 802.90L2545.40 878.20A63.90 63.90 0 0 0 2493.49 978.66Z" fill="#57c17b" stroke="#fff" stroke-width="2.00" stroke-linejoin="round"/><path d="M2544.81 802.90A139.20 139.20 0 0 1 2545.90 802.90L2545.90 878.20A63.90 63.90 0 0 0 2545.40 878.20Z" fill="#6f87d8" stroke="#fff" stroke-width="0.90" stroke-linejoin="round"/><path d="M2545.90 727.90A214.20 214.20 0 1 1 2376.08 1072.64L2435.54 1026.94A139.20 139.20 0 1 0 2545.90 802.90Z" fill="#663db8" stroke="#fff" stroke-width="2.00" stroke-linejoin="round"/><path d="M2376.08 1072.64A214.20 214.20 0 0 1 2370.22 1064.65L2431.73 1021.74A139.20 139.20 0 0 0 2435.54 1026.94Z" fill="#bc52bc" stroke="#fff" stroke-width="2.00" stroke-linejoin="round"/><path d="M2370.22 1064.65A214.20 214.20 0 0 1 2513.13 730.42L2524.60 804.54A139.20 139.20 0 0 0 2431.73 1021.74Z" fill="#663db8" stroke="#fff" stroke-width="2.00" stroke-linejoin="round"/><path d="M2513.13 730.42A214.20 214.20 0 0 1 2528.72 728.59L2534.74 803.35A139.20 139.20 0 0 0 2524.60 804.54Z" fill="#9e3533" stroke="#fff" stroke-width="2.00" stroke-linejoin="round"/><path d="M2528.72 728.59A214.20 214.20 0 0 1 2542.35 727.93L2543.59 802.92A139.20 139.20 0 0 0 2534.74 803.35Z" fill="#bfaf40" stroke="#fff" stroke-width="2.00" stroke-linejoin="round"/><path d="M2542.35 727.93A214.20 214.20 0 0 1 2544.22 727.91L2544.81 802.90A139.20 139.20 0 0 0 2543.59 802.92Z" fill="#bc52bc" stroke="#fff" stroke-width="0.50" stroke-linejoin="round"/><path d="M2544.22 727.91A214.20 214.20 0 0 1 2545.90 727.90L2545.90 802.90A139.20 139.20 0 0 0 2544.81 802.90Z" fill="#663db8" stroke="#fff" stroke-width="0.90" stroke-linejoin="round"/></svg>
<div style="position:absolute;left:2963.00px;top:738.00px;width:10.2px;height:10.2px;border-radius:50%;background:#00a69b;"></div>
<div class="t" style="left:2982.82px;top:735.00px;font:normal 15.00px/1 'Liberation Sans',sans-serif;color:#343741;transform:scaleX(1.0936);transform-origin:0 0;">block</div>
<svg style="position:absolute;left:3052.00px;top:732.00px;" width="12.00" height="22.00" viewBox="0 0 12 22"><rect x="5.10" y="4.80" width="3.2" height="3.2" fill="none" stroke="#4a4f5c" stroke-width="1.05"/><rect x="5.10" y="10.00" width="3.2" height="3.2" fill="none" stroke="#4a4f5c" stroke-width="1.05"/><rect x="5.10" y="15.20" width="3.2" height="3.2" fill="none" stroke="#4a4f5c" stroke-width="1.05"/></svg>
<div style="position:absolute;left:2963.00px;top:766.00px;width:10.2px;height:10.2px;border-radius:50%;background:#57c17b;"></div>
<div class="t" style="left:2982.83px;top:762.00px;font:normal 15.00px/1 'Liberation Sans',sans-serif;color:#343741;transform:scaleX(1.0819);transform-origin:0 0;">pass</div>
<svg style="position:absolute;left:3052.00px;top:759.00px;" width="12.00" height="22.00" viewBox="0 0 12 22"><rect x="5.10" y="4.80" width="3.2" height="3.2" fill="none" stroke="#4a4f5c" stroke-width="1.05"/><rect x="5.10" y="10.00" width="3.2" height="3.2" fill="none" stroke="#4a4f5c" stroke-width="1.05"/><rect x="5.10" y="15.20" width="3.2" height="3.2" fill="none" stroke="#4a4f5c" stroke-width="1.05"/></svg>
<div style="position:absolute;left:2963.00px;top:793.00px;width:10.2px;height:10.2px;border-radius:50%;background:#6f87d8;"></div>
<div class="t" style="left:2982.69px;top:790.00px;font:normal 15.00px/1 'Liberation Sans',sans-serif;color:#343741;transform:scaleX(1.1412);transform-origin:0 0;">rdr</div>
<svg style="position:absolute;left:3052.00px;top:787.00px;" width="12.00" height="22.00" viewBox="0 0 12 22"><rect x="5.10" y="4.70" width="3.2" height="3.2" fill="none" stroke="#4a4f5c" stroke-width="1.05"/><rect x="5.10" y="9.90" width="3.2" height="3.2" fill="none" stroke="#4a4f5c" stroke-width="1.05"/><rect x="5.10" y="15.10" width="3.2" height="3.2" fill="none" stroke="#4a4f5c" stroke-width="1.05"/></svg>
<div style="position:absolute;left:2134.00px;top:1132.00px;width:30.00px;height:30.00px;background:#f4f6fa;border-radius:5px;"></div>
<svg style="position:absolute;left:2134.00px;top:1132.00px;" width="30.00" height="30.00" viewBox="0 0 30 30"><path d="M7 9.5H10.1M12.3 9.5H22.8M7 13.2H10.1M12.3 13.2H22.8M7 16.8H10.1M12.3 16.8H22.8M7 20.5H10.1M12.3 20.5H22.8" stroke="#4d525e" stroke-width="1.15" fill="none"/></svg>
<svg style="position:absolute;left:0.00px;top:0.00px;pointer-events:none;" width="3094.00" height="1999.00" viewBox="0 0 3094 1999"><line x1="111.6" y1="1213" x2="111.6" y2="1605" stroke="#eceef3" stroke-width="1.3"/><line x1="111" y1="1604.8" x2="1998" y2="1604.8" stroke="#eceef3" stroke-width="1.3"/><rect x="112.80" y="1523.43" width="37.10" height="80.77" fill="#663db8"/><rect x="112.80" y="1526.42" width="37.10" height="77.78" fill="#6f87d8"/><rect x="112.80" y="1529.42" width="37.10" height="74.78" fill="#57c17b"/><rect x="112.80" y="1559.69" width="37.10" height="44.51" fill="#00a69b"/><rect x="152.09" y="1507.06" width="37.10" height="97.14" fill="#663db8"/><rect x="152.09" y="1510.06" width="37.10" height="94.14" fill="#6f87d8"/><rect x="152.09" y="1513.06" width="37.10" height="91.14" fill="#57c17b"/><rect x="152.09" y="1543.61" width="37.10" height="60.59" fill="#00a69b"/><rect x="191.39" y="1531.06" width="37.10" height="73.14" fill="#663db8"/><rect x="191.39" y="1534.06" width="37.10" height="70.14" fill="#6f87d8"/><rect x="191.39" y="1537.06" width="37.10" height="67.14" fill="#57c17b"/><rect x="191.39" y="1567.60" width="37.10" height="36.60" fill="#00a69b"/><rect x="230.69" y="1510.61" width="37.10" height="93.59" fill="#663db8"/><rect x="230.69" y="1513.61" width="37.10" height="90.59" fill="#6f87d8"/><rect x="230.69" y="1516.61" width="37.10" height="87.59" fill="#57c17b"/><rect x="230.69" y="1546.88" width="37.10" height="57.32" fill="#00a69b"/><rect x="269.98" y="1538.15" width="37.10" height="66.05" fill="#663db8"/><rect x="269.98" y="1540.88" width="37.10" height="63.32" fill="#6f87d8"/><rect x="269.98" y="1543.88" width="37.10" height="60.32" fill="#57c17b"/><rect x="269.98" y="1573.60" width="37.10" height="30.60" fill="#00a69b"/><rect x="309.28" y="1528.88" width="37.10" height="75.32" fill="#663db8"/><rect x="309.28" y="1531.61" width="37.10" height="72.59" fill="#6f87d8"/><rect x="309.28" y="1534.61" width="37.10" height="69.59" fill="#57c17b"/><rect x="309.28" y="1565.42" width="37.10" height="38.78" fill="#00a69b"/><rect x="348.57" y="1514.15" width="37.10" height="90.05" fill="#663db8"/><rect x="348.57" y="1516.88" width="37.10" height="87.32" fill="#6f87d8"/><rect x="348.57" y="1520.15" width="37.10" height="84.05" fill="#57c17b"/><rect x="348.57" y="1550.70" width="37.10" height="53.50" fill="#00a69b"/><rect x="387.87" y="1523.43" width="37.10" height="80.77" fill="#663db8"/><rect x="387.87" y="1526.42" width="37.10" height="77.78" fill="#6f87d8"/><rect x="387.87" y="1529.42" width="37.10" height="74.78" fill="#57c17b"/><rect x="387.87" y="1559.69" width="37.10" height="44.51" fill="#00a69b"/><rect x="427.16" y="1510.88" width="37.10" height="93.32" fill="#663db8"/><rect x="427.16" y="1513.88" width="37.10" height="90.32" fill="#6f87d8"/><rect x="427.16" y="1517.15" width="37.10" height="87.05" fill="#57c17b"/><rect x="427.16" y="1547.70" width="37.10" height="56.50" fill="#00a69b"/><rect x="466.46" y="1504.34" width="37.10" height="99.86" fill="#663db8"/><rect x="466.46" y="1507.34" width="37.10" height="96.86" fill="#6f87d8"/><rect x="466.46" y="1510.61" width="37.10" height="93.59" fill="#57c17b"/><rect x="466.46" y="1540.88" width="37.10" height="63.32" fill="#00a69b"/><rect x="505.75" y="1515.52" width="37.10" height="88.68" fill="#663db8"/><rect x="505.75" y="1518.24" width="37.10" height="85.96" fill="#6f87d8"/><rect x="505.75" y="1521.24" width="37.10" height="82.96" fill="#57c17b"/><rect x="505.75" y="1551.79" width="37.10" height="52.41" fill="#00a69b"/><rect x="545.04" y="1517.97" width="37.10" height="86.23" fill="#663db8"/><rect x="545.04" y="1520.70" width="37.10" height="83.50" fill="#6f87d8"/><rect x="545.04" y="1523.97" width="37.10" height="80.23" fill="#57c17b"/><rect x="545.04" y="1554.24" width="37.10" height="49.96" fill="#00a69b"/><rect x="584.34" y="1509.52" width="37.10" height="94.68" fill="#663db8"/><rect x="584.34" y="1512.52" width="37.10" height="91.68" fill="#6f87d8"/><rect x="584.34" y="1515.52" width="37.10" height="88.68" fill="#57c17b"/><rect x="584.34" y="1545.79" width="37.10" height="58.41" fill="#00a69b"/><rect x="623.63" y="1510.06" width="37.10" height="94.14" fill="#663db8"/><rect x="623.63" y="1513.06" width="37.10" height="91.14" fill="#6f87d8"/><rect x="623.63" y="1516.06" width="37.10" height="88.14" fill="#57c17b"/><rect x="623.63" y="1546.33" width="37.10" height="57.87" fill="#00a69b"/><rect x="662.93" y="1514.15" width="37.10" height="90.05" fill="#663db8"/><rect x="662.93" y="1517.15" width="37.10" height="87.05" fill="#6f87d8"/><rect x="662.93" y="1520.15" width="37.10" height="84.05" fill="#57c17b"/><rect x="662.93" y="1550.70" width="37.10" height="53.50" fill="#00a69b"/><rect x="702.23" y="1428.80" width="37.10" height="175.40" fill="#663db8"/><rect x="702.23" y="1441.34" width="37.10" height="162.86" fill="#6f87d8"/><rect x="702.23" y="1445.70" width="37.10" height="158.50" fill="#57c17b"/><rect x="702.23" y="1475.97" width="37.10" height="128.23" fill="#00a69b"/><rect x="741.52" y="1419.80" width="37.10" height="184.40" fill="#663db8"/><rect x="741.52" y="1479.25" width="37.10" height="124.95" fill="#6f87d8"/><rect x="741.52" y="1483.61" width="37.10" height="120.59" fill="#57c17b"/><rect x="741.52" y="1499.43" width="37.10" height="104.77" fill="#00a69b"/><rect x="780.81" y="1445.16" width="37.10" height="159.04" fill="#663db8"/><rect x="780.81" y="1463.98" width="37.10" height="140.22" fill="#6f87d8"/><rect x="780.81" y="1472.16" width="37.10" height="132.04" fill="#57c17b"/><rect x="780.81" y="1473.52" width="37.10" height="130.68" fill="#00a69b"/><rect x="820.11" y="1447.89" width="37.10" height="156.31" fill="#663db8"/><rect x="820.11" y="1454.98" width="37.10" height="149.22" fill="#6f87d8"/><rect x="820.11" y="1458.52" width="37.10" height="145.68" fill="#57c17b"/><rect x="820.11" y="1503.52" width="37.10" height="100.68" fill="#00a69b"/><rect x="859.40" y="1401.25" width="37.10" height="202.95" fill="#663db8"/><rect x="859.40" y="1425.80" width="37.10" height="178.40" fill="#6f87d8"/><rect x="859.40" y="1429.62" width="37.10" height="174.58" fill="#57c17b"/><rect x="859.40" y="1474.34" width="37.10" height="129.86" fill="#00a69b"/><rect x="898.70" y="1385.16" width="37.10" height="219.04" fill="#663db8"/><rect x="898.70" y="1417.34" width="37.10" height="186.86" fill="#6f87d8"/><rect x="898.70" y="1421.16" width="37.10" height="183.04" fill="#57c17b"/><rect x="898.70" y="1466.70" width="37.10" height="137.50" fill="#00a69b"/><rect x="938.00" y="1289.17" width="37.10" height="315.03" fill="#663db8"/><rect x="938.00" y="1437.25" width="37.10" height="166.95" fill="#6f87d8"/><rect x="938.00" y="1441.07" width="37.10" height="163.13" fill="#57c17b"/><rect x="938.00" y="1485.52" width="37.10" height="118.68" fill="#00a69b"/><rect x="977.29" y="1400.16" width="37.10" height="204.04" fill="#663db8"/><rect x="977.29" y="1406.98" width="37.10" height="197.22" fill="#6f87d8"/><rect x="977.29" y="1410.80" width="37.10" height="193.40" fill="#57c17b"/><rect x="977.29" y="1456.34" width="37.10" height="147.86" fill="#00a69b"/><rect x="1016.59" y="1401.80" width="37.10" height="202.40" fill="#663db8"/><rect x="1016.59" y="1405.07" width="37.10" height="199.13" fill="#6f87d8"/><rect x="1016.59" y="1408.62" width="37.10" height="195.58" fill="#57c17b"/><rect x="1016.59" y="1453.89" width="37.10" height="150.31" fill="#00a69b"/><rect x="1055.88" y="1439.71" width="37.10" height="164.49" fill="#663db8"/><rect x="1055.88" y="1442.16" width="37.10" height="162.04" fill="#6f87d8"/><rect x="1055.88" y="1445.70" width="37.10" height="158.50" fill="#57c17b"/><rect x="1055.88" y="1490.43" width="37.10" height="113.77" fill="#00a69b"/><rect x="1095.17" y="1472.70" width="37.10" height="131.50" fill="#663db8"/><rect x="1095.17" y="1475.70" width="37.10" height="128.50" fill="#6f87d8"/><rect x="1095.17" y="1479.52" width="37.10" height="124.68" fill="#57c17b"/><rect x="1095.17" y="1524.24" width="37.10" height="79.96" fill="#00a69b"/><rect x="1134.47" y="1502.15" width="37.10" height="102.05" fill="#663db8"/><rect x="1134.47" y="1505.15" width="37.10" height="99.05" fill="#6f87d8"/><rect x="1134.47" y="1508.43" width="37.10" height="95.77" fill="#57c17b"/><rect x="1134.47" y="1544.42" width="37.10" height="59.78" fill="#00a69b"/><rect x="1173.77" y="1493.70" width="37.10" height="110.50" fill="#663db8"/><rect x="1173.77" y="1496.15" width="37.10" height="108.05" fill="#6f87d8"/><rect x="1173.77" y="1499.43" width="37.10" height="104.77" fill="#57c17b"/><rect x="1173.77" y="1537.33" width="37.10" height="66.87" fill="#00a69b"/><rect x="1213.06" y="1523.70" width="37.10" height="80.50" fill="#663db8"/><rect x="1213.06" y="1526.15" width="37.10" height="78.05" fill="#6f87d8"/><rect x="1213.06" y="1529.42" width="37.10" height="74.78" fill="#57c17b"/><rect x="1213.06" y="1559.69" width="37.10" height="44.51" fill="#00a69b"/><rect x="1252.36" y="1406.71" width="37.10" height="197.49" fill="#663db8"/><rect x="1252.36" y="1414.34" width="37.10" height="189.86" fill="#6f87d8"/><rect x="1252.36" y="1418.71" width="37.10" height="185.49" fill="#57c17b"/><rect x="1252.36" y="1459.61" width="37.10" height="144.59" fill="#00a69b"/><rect x="1291.65" y="1325.99" width="37.10" height="278.21" fill="#663db8"/><rect x="1291.65" y="1340.99" width="37.10" height="263.21" fill="#6f87d8"/><rect x="1291.65" y="1344.53" width="37.10" height="259.67" fill="#57c17b"/><rect x="1291.65" y="1382.17" width="37.10" height="222.03" fill="#00a69b"/><rect x="1291.65" y="1323.53" width="37.10" height="2.45" fill="#bc52bc"/><rect x="1330.94" y="1213.09" width="37.10" height="391.11" fill="#663db8"/><rect x="1330.94" y="1258.36" width="37.10" height="345.84" fill="#6f87d8"/><rect x="1330.94" y="1262.99" width="37.10" height="341.21" fill="#57c17b"/><rect x="1330.94" y="1297.08" width="37.10" height="307.12" fill="#00a69b"/><rect x="1370.24" y="1549.06" width="37.10" height="55.14" fill="#663db8"/><rect x="1370.24" y="1556.42" width="37.10" height="47.78" fill="#6f87d8"/><rect x="1370.24" y="1556.97" width="37.10" height="47.23" fill="#57c17b"/><rect x="1370.24" y="1565.69" width="37.10" height="38.51" fill="#00a69b"/></svg>
<div class="t" style="left:92.60px;top:1599.00px;font:normal 12.50px/1 'Liberation Sans',sans-serif;color:#69707d;">0</div>
<div class="t" style="left:76.65px;top:1570.00px;font:normal 12.50px/1 'Liberation Sans',sans-serif;color:#69707d;transform:scaleX(1.1018);transform-origin:0 0;">500</div>
<div class="t" style="left:65.22px;top:1541.00px;font:normal 12.50px/1 'Liberation Sans',sans-serif;color:#69707d;transform:scaleX(1.0994);transform-origin:0 0;">1,000</div>
<div class="t" style="left:65.22px;top:1512.00px;font:normal 12.50px/1 'Liberation Sans',sans-serif;color:#69707d;transform:scaleX(1.0994);transform-origin:0 0;">1,500</div>
<div class="t" style="left:65.57px;top:1484.00px;font:normal 12.50px/1 'Liberation Sans',sans-serif;color:#69707d;transform:scaleX(1.0880);transform-origin:0 0;">2,000</div>
<div class="t" style="left:65.57px;top:1455.00px;font:normal 12.50px/1 'Liberation Sans',sans-serif;color:#69707d;transform:scaleX(1.0880);transform-origin:0 0;">2,500</div>
<div class="t" style="left:65.78px;top:1426.00px;font:normal 12.50px/1 'Liberation Sans',sans-serif;color:#69707d;transform:scaleX(1.0813);transform-origin:0 0;">3,000</div>
<div class="t" style="left:65.78px;top:1397.00px;font:normal 12.50px/1 'Liberation Sans',sans-serif;color:#69707d;transform:scaleX(1.0813);transform-origin:0 0;">3,500</div>
<div class="t" style="left:65.99px;top:1368.00px;font:normal 12.50px/1 'Liberation Sans',sans-serif;color:#69707d;transform:scaleX(1.0747);transform-origin:0 0;">4,000</div>
<div class="t" style="left:65.99px;top:1339.00px;font:normal 12.50px/1 'Liberation Sans',sans-serif;color:#69707d;transform:scaleX(1.0747);transform-origin:0 0;">4,500</div>
<div class="t" style="left:65.71px;top:1310.00px;font:normal 12.50px/1 'Liberation Sans',sans-serif;color:#69707d;transform:scaleX(1.0836);transform-origin:0 0;">5,000</div>
<div class="t" style="left:65.71px;top:1282.00px;font:normal 12.50px/1 'Liberation Sans',sans-serif;color:#69707d;transform:scaleX(1.0836);transform-origin:0 0;">5,500</div>
<div class="t" style="left:65.57px;top:1253.00px;font:normal 12.50px/1 'Liberation Sans',sans-serif;color:#69707d;transform:scaleX(1.0880);transform-origin:0 0;">6,000</div>
<div class="t" style="left:65.57px;top:1224.00px;font:normal 12.50px/1 'Liberation Sans',sans-serif;color:#69707d;transform:scaleX(1.0880);transform-origin:0 0;">6,500</div>
<div class="t" style="left:94.47px;top:1617.00px;font:normal 12.50px/1 'Liberation Sans',sans-serif;color:#69707d;transform:scaleX(1.0963);transform-origin:0 0;">00:00</div>
<div class="t" style="left:330.27px;top:1617.00px;font:normal 12.50px/1 'Liberation Sans',sans-serif;color:#69707d;transform:scaleX(1.0963);transform-origin:0 0;">03:00</div>
<div class="t" style="left:566.07px;top:1617.00px;font:normal 12.50px/1 'Liberation Sans',sans-serif;color:#69707d;transform:scaleX(1.0963);transform-origin:0 0;">06:00</div>
<div class="t" style="left:801.87px;top:1617.00px;font:normal 12.50px/1 'Liberation Sans',sans-serif;color:#69707d;transform:scaleX(1.0963);transform-origin:0 0;">09:00</div>
<div class="t" style="left:1037.11px;top:1617.00px;font:normal 12.50px/1 'Liberation Sans',sans-serif;color:#69707d;transform:scaleX(1.1146);transform-origin:0 0;">12:00</div>
<div class="t" style="left:1272.91px;top:1617.00px;font:normal 12.50px/1 'Liberation Sans',sans-serif;color:#69707d;transform:scaleX(1.1146);transform-origin:0 0;">15:00</div>
<div class="t" style="left:1508.71px;top:1617.00px;font:normal 12.50px/1 'Liberation Sans',sans-serif;color:#69707d;transform:scaleX(1.1146);transform-origin:0 0;">18:00</div>
<div class="t" style="left:1744.86px;top:1617.00px;font:normal 12.50px/1 'Liberation Sans',sans-serif;color:#69707d;transform:scaleX(1.1031);transform-origin:0 0;">21:00</div>
<div class="t" style="left:927.77px;top:1651.00px;font:bold 15.00px/1 'Liberation Sans',sans-serif;color:#343741;transform:scaleX(1.0536);transform-origin:0 0;">Firewall - Network Transport/Time</div>
<div class="t" style="left:32.8px;top:1408.5px;font:bold 15px/1 'Liberation Sans',sans-serif;color:#343741;letter-spacing:0.3px;transform:translate(-50%,-50%) rotate(-90deg);">Count</div>
<div style="position:absolute;left:2025.70px;top:1217.90px;width:10.2px;height:10.2px;border-radius:50%;background:#bc52bc;"></div>
<div class="t" style="left:2045.96px;top:1215.00px;font:normal 15.00px/1 'Liberation Sans',sans-serif;color:#343741;transform:scaleX(1.1741);transform-origin:0 0;">ip</div>
<svg style="position:absolute;left:2101.00px;top:1212.00px;" width="12.00" height="22.00" viewBox="0 0 12 22"><rect x="4.60" y="4.70" width="3.2" height="3.2" fill="none" stroke="#4a4f5c" stroke-width="1.05"/><rect x="4.60" y="9.90" width="3.2" height="3.2" fill="none" stroke="#4a4f5c" stroke-width="1.05"/><rect x="4.60" y="15.10" width="3.2" height="3.2" fill="none" stroke="#4a4f5c" stroke-width="1.05"/></svg>
<div style="position:absolute;left:2025.70px;top:1245.80px;width:10.2px;height:10.2px;border-radius:50%;background:#663db8;"></div>
<div class="t" style="left:2046.84px;top:1242.00px;font:normal 15.00px/1 'Liberation Sans',sans-serif;color:#343741;transform:scaleX(1.1562);transform-origin:0 0;">tcp</div>
<svg style="position:absolute;left:2101.00px;top:1239.00px;" width="12.00" height="22.00" viewBox="0 0 12 22"><rect x="4.60" y="4.80" width="3.2" height="3.2" fill="none" stroke="#4a4f5c" stroke-width="1.05"/><rect x="4.60" y="10.00" width="3.2" height="3.2" fill="none" stroke="#4a4f5c" stroke-width="1.05"/><rect x="4.60" y="15.20" width="3.2" height="3.2" fill="none" stroke="#4a4f5c" stroke-width="1.05"/></svg>
<div style="position:absolute;left:2025.70px;top:1273.00px;width:10.2px;height:10.2px;border-radius:50%;background:#6f87d8;"></div>
<div class="t" style="left:2046.01px;top:1270.00px;font:normal 15.00px/1 'Liberation Sans',sans-serif;color:#343741;transform:scaleX(1.1139);transform-origin:0 0;">icmp</div>
<svg style="position:absolute;left:2101.00px;top:1267.00px;" width="12.00" height="22.00" viewBox="0 0 12 22"><rect x="4.60" y="4.60" width="3.2" height="3.2" fill="none" stroke="#4a4f5c" stroke-width="1.05"/><rect x="4.60" y="9.80" width="3.2" height="3.2" fill="none" stroke="#4a4f5c" stroke-width="1.05"/><rect x="4.60" y="15.00" width="3.2" height="3.2" fill="none" stroke="#4a4f5c" stroke-width="1.05"/></svg>
<div style="position:absolute;left:2025.70px;top:1300.50px;width:10.2px;height:10.2px;border-radius:50%;background:#57c17b;"></div>
<div class="t" style="left:2046.02px;top:1297.00px;font:normal 15.00px/1 'Liberation Sans',sans-serif;color:#343741;transform:scaleX(1.1068);transform-origin:0 0;">igmp</div>
<svg style="position:absolute;left:2101.00px;top:1294.00px;" width="12.00" height="22.00" viewBox="0 0 12 22"><rect x="4.60" y="4.70" width="3.2" height="3.2" fill="none" stroke="#4a4f5c" stroke-width="1.05"/><rect x="4.60" y="9.90" width="3.2" height="3.2" fill="none" stroke="#4a4f5c" stroke-width="1.05"/><rect x="4.60" y="15.10" width="3.2" height="3.2" fill="none" stroke="#4a4f5c" stroke-width="1.05"/></svg>
<div style="position:absolute;left:2025.70px;top:1327.70px;width:10.2px;height:10.2px;border-radius:50%;background:#00a69b;"></div>
<div class="t" style="left:2046.08px;top:1325.00px;font:normal 15.00px/1 'Liberation Sans',sans-serif;color:#343741;transform:scaleX(1.1289);transform-origin:0 0;">udp</div>
<svg style="position:absolute;left:2101.00px;top:1322.00px;" width="12.00" height="22.00" viewBox="0 0 12 22"><rect x="4.60" y="4.70" width="3.2" height="3.2" fill="none" stroke="#4a4f5c" stroke-width="1.05"/><rect x="4.60" y="9.90" width="3.2" height="3.2" fill="none" stroke="#4a4f5c" stroke-width="1.05"/><rect x="4.60" y="15.10" width="3.2" height="3.2" fill="none" stroke="#4a4f5c" stroke-width="1.05"/></svg>
<div style="position:absolute;left:18.00px;top:1657.00px;width:30.00px;height:30.00px;background:#f4f6fa;border-radius:5px;"></div>
<svg style="position:absolute;left:18.00px;top:1657.00px;" width="30.00" height="30.00" viewBox="0 0 30 30"><path d="M7 9.5H10.1M12.3 9.5H22.8M7 13.2H10.1M12.3 13.2H22.8M7 16.8H10.1M12.3 16.8H22.8M7 20.5H10.1M12.3 20.5H22.8" stroke="#4d525e" stroke-width="1.15" fill="none"/></svg>
<svg style="position:absolute;left:0.00px;top:0.00px;pointer-events:none;" width="3094.00" height="1999.00" viewBox="0 0 3094 1999"><path d="M2546.70 1217.90A231.60 231.60 0 1 1 2359.57 1585.96L2490.54 1490.45A69.50 69.50 0 1 0 2546.70 1380.00Z" fill="#00a69b" stroke="#fff" stroke-width="2.00" stroke-linejoin="round"/><path d="M2359.57 1585.96A231.60 231.60 0 0 1 2393.84 1275.51L2500.83 1397.29A69.50 69.50 0 0 0 2490.54 1490.45Z" fill="#57c17b" stroke="#fff" stroke-width="2.00" stroke-linejoin="round"/><path d="M2393.84 1275.51A231.60 231.60 0 0 1 2507.28 1221.28L2534.87 1381.01A69.50 69.50 0 0 0 2500.83 1397.29Z" fill="#6f87d8" stroke="#fff" stroke-width="2.00" stroke-linejoin="round"/><path d="M2507.28 1221.28A231.60 231.60 0 0 1 2546.30 1217.90L2546.58 1380.00A69.50 69.50 0 0 0 2534.87 1381.01Z" fill="#663db8" stroke="#fff" stroke-width="2.00" stroke-linejoin="round"/></svg>
<div style="position:absolute;left:2963.90px;top:1228.00px;width:10.2px;height:10.2px;border-radius:50%;background:#00a69b;"></div>
<div class="t" style="left:2984.68px;top:1225.00px;font:normal 15.00px/1 'Liberation Sans',sans-serif;color:#343741;transform:scaleX(1.1289);transform-origin:0 0;">udp</div>
<svg style="position:absolute;left:3053.00px;top:1222.00px;" width="12.00" height="22.00" viewBox="0 0 12 22"><rect x="4.70" y="4.70" width="3.2" height="3.2" fill="none" stroke="#4a4f5c" stroke-width="1.05"/><rect x="4.70" y="9.90" width="3.2" height="3.2" fill="none" stroke="#4a4f5c" stroke-width="1.05"/><rect x="4.70" y="15.10" width="3.2" height="3.2" fill="none" stroke="#4a4f5c" stroke-width="1.05"/></svg>
<div style="position:absolute;left:2963.90px;top:1255.60px;width:10.2px;height:10.2px;border-radius:50%;background:#57c17b;"></div>
<div class="t" style="left:2984.62px;top:1252.00px;font:normal 15.00px/1 'Liberation Sans',sans-serif;color:#343741;transform:scaleX(1.1068);transform-origin:0 0;">igmp</div>
<svg style="position:absolute;left:3053.00px;top:1249.00px;" width="12.00" height="22.00" viewBox="0 0 12 22"><rect x="4.70" y="4.80" width="3.2" height="3.2" fill="none" stroke="#4a4f5c" stroke-width="1.05"/><rect x="4.70" y="10.00" width="3.2" height="3.2" fill="none" stroke="#4a4f5c" stroke-width="1.05"/><rect x="4.70" y="15.20" width="3.2" height="3.2" fill="none" stroke="#4a4f5c" stroke-width="1.05"/></svg>
<div style="position:absolute;left:2963.90px;top:1282.90px;width:10.2px;height:10.2px;border-radius:50%;background:#6f87d8;"></div>
<div class="t" style="left:2985.44px;top:1280.00px;font:normal 15.00px/1 'Liberation Sans',sans-serif;color:#343741;transform:scaleX(1.1562);transform-origin:0 0;">tcp</div>
<svg style="position:absolute;left:3053.00px;top:1277.00px;" width="12.00" height="22.00" viewBox="0 0 12 22"><rect x="4.70" y="4.60" width="3.2" height="3.2" fill="none" stroke="#4a4f5c" stroke-width="1.05"/><rect x="4.70" y="9.80" width="3.2" height="3.2" fill="none" stroke="#4a4f5c" stroke-width="1.05"/><rect x="4.70" y="15.00" width="3.2" height="3.2" fill="none" stroke="#4a4f5c" stroke-width="1.05"/></svg>
<div style="position:absolute;left:2963.90px;top:1310.50px;width:10.2px;height:10.2px;border-radius:50%;background:#663db8;"></div>
<div class="t" style="left:2984.61px;top:1307.00px;font:normal 15.00px/1 'Liberation Sans',sans-serif;color:#343741;transform:scaleX(1.1139);transform-origin:0 0;">icmp</div>
<svg style="position:absolute;left:3053.00px;top:1304.00px;" width="12.00" height="22.00" viewBox="0 0 12 22"><rect x="4.70" y="4.70" width="3.2" height="3.2" fill="none" stroke="#4a4f5c" stroke-width="1.05"/><rect x="4.70" y="9.90" width="3.2" height="3.2" fill="none" stroke="#4a4f5c" stroke-width="1.05"/><rect x="4.70" y="15.10" width="3.2" height="3.2" fill="none" stroke="#4a4f5c" stroke-width="1.05"/></svg>
<div style="position:absolute;left:2963.90px;top:1338.10px;width:10.2px;height:10.2px;border-radius:50%;background:#bc52bc;"></div>
<div class="t" style="left:2984.56px;top:1335.00px;font:normal 15.00px/1 'Liberation Sans',sans-serif;color:#343741;transform:scaleX(1.1741);transform-origin:0 0;">ip</div>
<svg style="position:absolute;left:3053.00px;top:1332.00px;" width="12.00" height="22.00" viewBox="0 0 12 22"><rect x="4.70" y="4.70" width="3.2" height="3.2" fill="none" stroke="#4a4f5c" stroke-width="1.05"/><rect x="4.70" y="9.90" width="3.2" height="3.2" fill="none" stroke="#4a4f5c" stroke-width="1.05"/><rect x="4.70" y="15.10" width="3.2" height="3.2" fill="none" stroke="#4a4f5c" stroke-width="1.05"/></svg>
<div style="position:absolute;left:2134.00px;top:1657.00px;width:30.00px;height:30.00px;background:#f4f6fa;border-radius:5px;"></div>
<svg style="position:absolute;left:2134.00px;top:1657.00px;" width="30.00" height="30.00" viewBox="0 0 30 30"><path d="M7 9.5H10.1M12.3 9.5H22.8M7 13.2H10.1M12.3 13.2H22.8M7 16.8H10.1M12.3 16.8H22.8M7 20.5H10.1M12.3 20.5H22.8" stroke="#4d525e" stroke-width="1.15" fill="none"/></svg>
<div class="t" style="left:2923.87px;top:1738.00px;font:bold 17.50px/1 'Liberation Sans',sans-serif;color:#343741;transform:scaleX(1.1830);transform-origin:0 0;">79920</div>
<div class="t" style="left:2985.44px;top:1738.00px;font:normal 17.50px/1 'Liberation Sans',sans-serif;color:#343741;transform:scaleX(1.0859);transform-origin:0 0;">documents</div>
<div class="t" style="left:57.94px;top:1776.00px;font:bold 15.00px/1 'Liberation Sans',sans-serif;color:#343741;transform:scaleX(1.0696);transform-origin:0 0;">Time</div>
<div class="t" style="left:321.05px;top:1776.00px;font:bold 15.00px/1 'Liberation Sans',sans-serif;color:#343741;transform:scaleX(1.0426);transform-origin:0 0;">observer.name</div>
<div class="t" style="left:651.45px;top:1776.00px;font:bold 15.00px/1 'Liberation Sans',sans-serif;color:#343741;transform:scaleX(1.0408);transform-origin:0 0;">observer.ingress.vlan.id</div>
<div class="t" style="left:1094.26px;top:1776.00px;font:bold 15.00px/1 'Liberation Sans',sans-serif;color:#343741;transform:scaleX(1.0374);transform-origin:0 0;">source.ip</div>
<div class="t" style="left:1356.25px;top:1776.00px;font:bold 15.00px/1 'Liberation Sans',sans-serif;color:#343741;transform:scaleX(1.0415);transform-origin:0 0;">source.port</div>
<div class="t" style="left:1647.37px;top:1776.00px;font:bold 15.00px/1 'Liberation Sans',sans-serif;color:#343741;transform:scaleX(1.0467);transform-origin:0 0;">destination.ip</div>
<div class="t" style="left:1963.87px;top:1776.00px;font:bold 15.00px/1 'Liberation Sans',sans-serif;color:#343741;transform:scaleX(1.0482);transform-origin:0 0;">destination.port</div>
<div class="t" style="left:2308.25px;top:1776.00px;font:bold 15.00px/1 'Liberation Sans',sans-serif;color:#343741;transform:scaleX(1.0755);transform-origin:0 0;">rule.id</div>
<div class="t" style="left:2818.64px;top:1776.00px;font:bold 15.00px/1 'Liberation Sans',sans-serif;color:#343741;transform:scaleX(1.0639);transform-origin:0 0;">event.action</div>
<svg style="position:absolute;left:98.40px;top:1780.20px;" width="12.00" height="11.00" viewBox="0 0 12 11"><path d="M5.6 0.6V9.4 M1.4 5.4L5.6 9.6L9.8 5.4" fill="none" stroke="#0a6fc2" stroke-width="1.3"/></svg>
<div style="position:absolute;left:13.00px;top:1804.80px;width:3068.00px;height:1.40px;background:#d3dae6;"></div>
<div style="position:absolute;left:13.00px;top:1850.90px;width:3068.00px;height:1.30px;background:#d3dae6;"></div>
<svg style="position:absolute;left:26.70px;top:1821.90px;" width="9.00" height="13.00" viewBox="0 0 9 13"><path d="M1.2 0.8L6.4 6L1.2 11.2" fill="none" stroke="#343741" stroke-width="1.3"/></svg>
<div class="t" style="left:57.98px;top:1821.00px;font:normal 15.00px/1 'Liberation Mono',monospace;color:#343741;-webkit-text-stroke:0.22px #343741;letter-spacing:-0.08px;">Dec 19, 2022 @ 16:08:08.000</div>
<div class="t" style="left:321.62px;top:1821.00px;font:normal 15.00px/1 'Liberation Mono',monospace;color:#343741;-webkit-text-stroke:0.22px #343741;letter-spacing:-0.08px;">firewall.kali.purple</div>
<div class="t" style="left:659.60px;top:1821.00px;font:normal 15.00px/1 'Liberation Mono',monospace;color:#343741;-webkit-text-stroke:0.22px #343741;letter-spacing:-0.08px;">-</div>
<div class="t" style="left:1094.75px;top:1821.00px;font:normal 15.00px/1 'Liberation Mono',monospace;color:#343741;-webkit-text-stroke:0.22px #343741;letter-spacing:-0.08px;">192.168.254.200</div>
<div class="t" style="left:1364.40px;top:1821.00px;font:normal 15.00px/1 'Liberation Mono',monospace;color:#343741;-webkit-text-stroke:0.22px #343741;letter-spacing:-0.08px;">-</div>
<div class="t" style="left:1647.95px;top:1821.00px;font:normal 15.00px/1 'Liberation Mono',monospace;color:#343741;-webkit-text-stroke:0.22px #343741;letter-spacing:-0.08px;">224.0.0.22</div>
<div class="t" style="left:1972.10px;top:1821.00px;font:normal 15.00px/1 'Liberation Mono',monospace;color:#343741;-webkit-text-stroke:0.22px #343741;letter-spacing:-0.08px;">-</div>
<div class="t" style="left:2309.40px;top:1821.00px;font:normal 15.00px/1 'Liberation Mono',monospace;color:#343741;-webkit-text-stroke:0.22px #343741;letter-spacing:-0.08px;">02f4bab031b57d1e30553ce08e0ec131</div>
<div class="t" style="left:2818.92px;top:1821.00px;font:normal 15.00px/1 'Liberation Mono',monospace;color:#343741;-webkit-text-stroke:0.22px #343741;letter-spacing:-0.08px;">block</div>
<div style="position:absolute;left:13.00px;top:1896.90px;width:3068.00px;height:1.30px;background:#d3dae6;"></div>
<svg style="position:absolute;left:26.70px;top:1867.90px;" width="9.00" height="13.00" viewBox="0 0 9 13"><path d="M1.2 0.8L6.4 6L1.2 11.2" fill="none" stroke="#343741" stroke-width="1.3"/></svg>
<div class="t" style="left:57.98px;top:1867.00px;font:normal 15.00px/1 'Liberation Mono',monospace;color:#343741;-webkit-text-stroke:0.22px #343741;letter-spacing:-0.08px;">Dec 19, 2022 @ 16:08:07.000</div>
<div class="t" style="left:321.62px;top:1867.00px;font:normal 15.00px/1 'Liberation Mono',monospace;color:#343741;-webkit-text-stroke:0.22px #343741;letter-spacing:-0.08px;">firewall.kali.purple</div>
<div class="t" style="left:659.60px;top:1867.00px;font:normal 15.00px/1 'Liberation Mono',monospace;color:#343741;-webkit-text-stroke:0.22px #343741;letter-spacing:-0.08px;">-</div>
<div class="t" style="left:1094.75px;top:1867.00px;font:normal 15.00px/1 'Liberation Mono',monospace;color:#343741;-webkit-text-stroke:0.22px #343741;letter-spacing:-0.08px;">192.168.1.10</div>
<div class="t" style="left:1356.90px;top:1867.00px;font:normal 15.00px/1 'Liberation Mono',monospace;color:#343741;-webkit-text-stroke:0.22px #343741;letter-spacing:-0.08px;">5353</div>
<div class="t" style="left:1647.95px;top:1867.00px;font:normal 15.00px/1 'Liberation Mono',monospace;color:#343741;-webkit-text-stroke:0.22px #343741;letter-spacing:-0.08px;">224.0.0.251</div>
<div class="t" style="left:1964.60px;top:1867.00px;font:normal 15.00px/1 'Liberation Mono',monospace;color:#343741;-webkit-text-stroke:0.22px #343741;letter-spacing:-0.08px;">5353</div>
<div class="t" style="left:2309.40px;top:1867.00px;font:normal 15.00px/1 'Liberation Mono',monospace;color:#343741;-webkit-text-stroke:0.22px #343741;letter-spacing:-0.08px;">02f4bab031b57d1e30553ce08e0ec131</div>
<div class="t" style="left:2818.92px;top:1867.00px;font:normal 15.00px/1 'Liberation Mono',monospace;color:#343741;-webkit-text-stroke:0.22px #343741;letter-spacing:-0.08px;">block</div>
<div style="position:absolute;left:13.00px;top:1942.90px;width:3068.00px;height:1.30px;background:#d3dae6;"></div>
<svg style="position:absolute;left:26.70px;top:1913.90px;" width="9.00" height="13.00" viewBox="0 0 9 13"><path d="M1.2 0.8L6.4 6L1.2 11.2" fill="none" stroke="#343741" stroke-width="1.3"/></svg>
<div class="t" style="left:57.98px;top:1913.00px;font:normal 15.00px/1 'Liberation Mono',monospace;color:#343741;-webkit-text-stroke:0.22px #343741;letter-spacing:-0.08px;">Dec 19, 2022 @ 16:08:07.000</div>
<div class="t" style="left:321.62px;top:1913.00px;font:normal 15.00px/1 'Liberation Mono',monospace;color:#343741;-webkit-text-stroke:0.22px #343741;letter-spacing:-0.08px;">firewall.kali.purple</div>
<div class="t" style="left:659.60px;top:1913.00px;font:normal 15.00px/1 'Liberation Mono',monospace;color:#343741;-webkit-text-stroke:0.22px #343741;letter-spacing:-0.08px;">-</div>
<div class="t" style="left:1094.75px;top:1913.00px;font:normal 15.00px/1 'Liberation Mono',monospace;color:#343741;-webkit-text-stroke:0.22px #343741;letter-spacing:-0.08px;">192.168.1.75</div>
<div class="t" style="left:1356.90px;top:1913.00px;font:normal 15.00px/1 'Liberation Mono',monospace;color:#343741;-webkit-text-stroke:0.22px #343741;letter-spacing:-0.08px;">5353</div>
<div class="t" style="left:1647.95px;top:1913.00px;font:normal 15.00px/1 'Liberation Mono',monospace;color:#343741;-webkit-text-stroke:0.22px #343741;letter-spacing:-0.08px;">224.0.0.251</div>
<div class="t" style="left:1964.60px;top:1913.00px;font:normal 15.00px/1 'Liberation Mono',monospace;color:#343741;-webkit-text-stroke:0.22px #343741;letter-spacing:-0.08px;">5353</div>
<div class="t" style="left:2309.40px;top:1913.00px;font:normal 15.00px/1 'Liberation Mono',monospace;color:#343741;-webkit-text-stroke:0.22px #343741;letter-spacing:-0.08px;">02f4bab031b57d1e30553ce08e0ec131</div>
<div class="t" style="left:2818.92px;top:1913.00px;font:normal 15.00px/1 'Liberation Mono',monospace;color:#343741;-webkit-text-stroke:0.22px #343741;letter-spacing:-0.08px;">block</div>
<div style="position:absolute;left:13.00px;top:1988.90px;width:3068.00px;height:1.30px;background:#d3dae6;"></div>
<svg style="position:absolute;left:26.70px;top:1959.90px;" width="9.00" height="13.00" viewBox="0 0 9 13"><path d="M1.2 0.8L6.4 6L1.2 11.2" fill="none" stroke="#343741" stroke-width="1.3"/></svg>
<div class="t" style="left:57.98px;top:1959.00px;font:normal 15.00px/1 'Liberation Mono',monospace;color:#343741;-webkit-text-stroke:0.22px #343741;letter-spacing:-0.08px;">Dec 19, 2022 @ 16:08:06.000</div>
<div class="t" style="left:321.62px;top:1959.00px;font:normal 15.00px/1 'Liberation Mono',monospace;color:#343741;-webkit-text-stroke:0.22px #343741;letter-spacing:-0.08px;">firewall.kali.purple</div>
<div class="t" style="left:659.60px;top:1959.00px;font:normal 15.00px/1 'Liberation Mono',monospace;color:#343741;-webkit-text-stroke:0.22px #343741;letter-spacing:-0.08px;">-</div>
<div class="t" style="left:1094.75px;top:1959.00px;font:normal 15.00px/1 'Liberation Mono',monospace;color:#343741;-webkit-text-stroke:0.22px #343741;letter-spacing:-0.08px;">192.168.254.200</div>
<div class="t" style="left:1364.40px;top:1959.00px;font:normal 15.00px/1 'Liberation Mono',monospace;color:#343741;-webkit-text-stroke:0.22px #343741;letter-spacing:-0.08px;">-</div>
<div class="t" style="left:1647.95px;top:1959.00px;font:normal 15.00px/1 'Liberation Mono',monospace;color:#343741;-webkit-text-stroke:0.22px #343741;letter-spacing:-0.08px;">224.0.0.22</div>
<div class="t" style="left:1972.10px;top:1959.00px;font:normal 15.00px/1 'Liberation Mono',monospace;color:#343741;-webkit-text-stroke:0.22px #343741;letter-spacing:-0.08px;">-</div>
<div class="t" style="left:2309.40px;top:1959.00px;font:normal 15.00px/1 'Liberation Mono',monospace;color:#343741;-webkit-text-stroke:0.22px #343741;letter-spacing:-0.08px;">02f4bab031b57d1e30553ce08e0ec131</div>
<div class="t" style="left:2818.92px;top:1959.00px;font:normal 15.00px/1 'Liberation Mono',monospace;color:#343741;-webkit-text-stroke:0.22px #343741;letter-spacing:-0.08px;">block</div>
<div style="position:absolute;left:0.00px;top:0.00px;width:3094.00px;height:6.50px;background:#252a33;"></div>
<div style="position:absolute;left:0.00px;top:0.00px;width:3.00px;height:1999.00px;background:linear-gradient(#3c3f43 0,#3c3f43 430px,#707174 440px,#707174 1690px,#2a2b2e 1700px,#2a2b2e 1999px);"></div>
<div style="position:absolute;left:3091.00px;top:0.00px;width:3.00px;height:1999.00px;background:#43464c;"></div>
<div style="position:absolute;left:0.00px;top:1995.60px;width:3094.00px;height:3.40px;background:#2b2d31;"></div>
<svg style="position:absolute;left:0.00px;top:1979.00px;" width="20.00" height="20.00" viewBox="0 0 20 20"><path d="M0 0H3V5A12 12 0 0 0 15 17H20V20H0Z" fill="#2b2d31"/></svg>
<svg style="position:absolute;left:3074.00px;top:1979.00px;" width="20.00" height="20.00" viewBox="0 0 20 20"><path d="M20 0H17V5A12 12 0 0 1 5 17H0V20H20Z" fill="#2b2d31"/></svg>
</body></html>
